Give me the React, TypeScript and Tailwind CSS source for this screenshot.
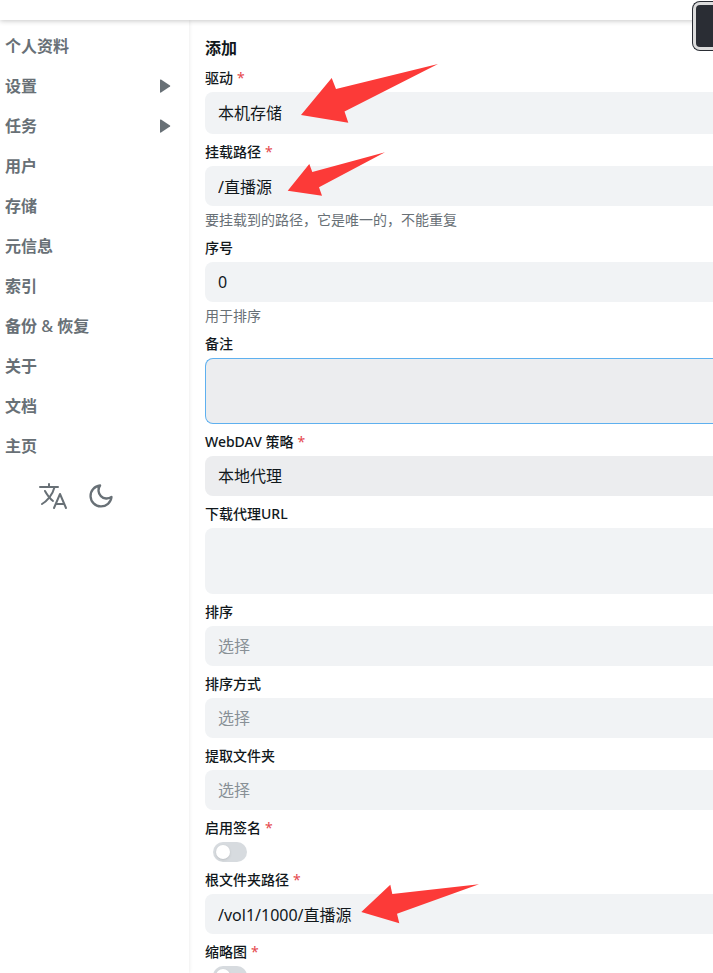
import React, { useState } from 'react';
import { IoLanguageOutline } from 'react-icons/io5';
import { FiMoon } from 'react-icons/fi';

type MenuItem = {
  key: string;
  title: React.ReactNode;
  hasChildren?: boolean;
};

const menus: MenuItem[] = [
  { key: 'profile', title: '个人资料' },
  { key: 'settings', title: '设置', hasChildren: true },
  { key: 'tasks', title: '任务', hasChildren: true },
  { key: 'users', title: '用户' },
  { key: 'storages', title: '存储' },
  { key: 'metas', title: '元信息' },
  { key: 'indexes', title: '索引' },
  {
    key: 'backup',
    title: (
      <span>
        备份 <span className="font-medium">&amp;</span> 恢复
      </span>
    ),
  },
  { key: 'about', title: '关于' },
  { key: 'docs', title: '文档' },
  { key: 'home', title: '主页' },
];

type FieldProps = {
  id: string;
  label: string;
  required?: boolean;
  help?: string;
  children: React.ReactNode;
};

const control =
  'block w-full appearance-none rounded-l-lg bg-[#f1f3f5] px-[13px] text-base outline-none';

function Field({ id, label, required, help, children }: FieldProps) {
  return (
    <div className="flex flex-col gap-1">
      <label htmlFor={id} className="text-sm leading-5 font-medium">
        {label}
        {required && <span className="ml-1 font-normal text-[#e5484d]">*</span>}
      </label>
      {children}
      {help && <p className="text-sm leading-5 text-[#687076]">{help}</p>}
    </div>
  );
}

function EmptySelect({ id, options }: { id: string; options: string[] }) {
  const [value, setValue] = useState<string>('');
  return (
    <select
      id={id}
      value={value}
      onChange={(e) => setValue(e.target.value)}
      className={`${control} h-10 ${value ? 'text-[#11181c]' : 'text-[#889096]'}`}
    >
      <option value="">选择</option>
      {options.map((option) => (
        <option key={option}>{option}</option>
      ))}
    </select>
  );
}

function Switch({ id }: { id: string }) {
  return (
    <input
      id={id}
      type="checkbox"
      className="ml-2 h-5 w-[34px] appearance-none rounded-full bg-[#d7dbdf] p-[3px] before:block before:size-[14px] before:rounded-full before:bg-white before:shadow-sm checked:bg-[#0090ff] checked:before:ml-[14px]"
    />
  );
}

function Arrow({ points, className }: { points: string; className: string }) {
  return (
    <svg
      aria-hidden="true"
      width="140"
      height="64"
      className={`pointer-events-none absolute ${className}`}
    >
      <polygon points={points} fill="#fc3a38" />
    </svg>
  );
}

export default function App() {
  const [path, setPath] = useState<string>('/直播源');
  const [order, setOrder] = useState<string>('0');
  const [root, setRoot] = useState<string>('/vol1/1000/直播源');

  return (
    <div className="relative flex h-screen flex-col overflow-hidden bg-white font-['Noto_Sans','Noto_Sans_CJK_SC',sans-serif] text-[#11181c]">
      <header className="relative z-10 h-5 shrink-0 bg-white shadow-[0_1px_5px_rgba(0,0,0,0.22)]" />
      <div className="flex min-h-0 flex-1">
        <aside className="w-[189px] shrink-0 pt-[6px] shadow-[0_0_4px_rgba(0,0,0,0.1)]">
          <nav className="flex flex-col">
            {menus.map((menu) => (
              <a
                key={menu.key}
                href="#"
                className="flex h-10 items-center justify-between pr-[18px] pl-[5px] text-base font-bold text-[#687076]"
              >
                {menu.title}
                {menu.hasChildren && (
                  <svg width="11" height="14" viewBox="0 0 11 14" fill="#687076">
                    <path d="M0 1Q0 0 1 0.600L10 6.400Q10.600 7 10 7.600L1 13.400Q0 14 0 13Z" />
                  </svg>
                )}
              </a>
            ))}
          </nav>
          <div className="mt-[14px] flex gap-4 pl-[37px] text-[#687076]">
            <button type="button" aria-label="语言">
              <IoLanguageOutline size={32} />
            </button>
            <button type="button" aria-label="深色模式" className="p-0.5">
              <FiMoon size={28} />
            </button>
          </div>
        </aside>
        <main className="min-w-0 flex-1 pt-4 pl-4">
          <form className="flex flex-col gap-2">
            <h1 className="text-base leading-6 font-bold">添加</h1>
            <Field id="driver" label="驱动" required>
              <select id="driver" className={`${control} h-[42px]`}>
                <option>本机存储</option>
              </select>
            </Field>
            <Field
              id="mount_path"
              label="挂载路径"
              required
              help="要挂载到的路径，它是唯一的，不能重复"
            >
              <input
                id="mount_path"
                value={path}
                onChange={(e) => setPath(e.target.value)}
                className={`${control} h-10`}
              />
            </Field>
            <Field id="order" label="序号" help="用于排序">
              <input
                id="order"
                value={order}
                onChange={(e) => setOrder(e.target.value)}
                className={`${control} h-10`}
              />
            </Field>
            <Field id="remark" label="备注">
              <textarea
                id="remark"
                className="block h-[66px] w-full resize-none rounded-l-lg border border-r-0 border-[#5eb0ef] bg-[#ecedef] px-3 py-2 text-base outline-none"
              />
            </Field>
            <Field id="webdav_policy" label="WebDAV 策略" required>
              <select
                id="webdav_policy"
                className="block h-10 w-full appearance-none rounded-l-lg bg-[#ecedef] px-[13px] text-base outline-none"
              >
                <option>本地代理</option>
              </select>
            </Field>
            <Field id="down_proxy_url" label="下载代理URL">
              <textarea
                id="down_proxy_url"
                className={`${control} h-[66px] resize-none py-2`}
              />
            </Field>
            <Field id="order_by" label="排序">
              <EmptySelect id="order_by" options={['名称', '大小', '修改时间']} />
            </Field>
            <Field id="order_direction" label="排序方式">
              <EmptySelect id="order_direction" options={['升序', '降序']} />
            </Field>
            <Field id="extract_folder" label="提取文件夹">
              <EmptySelect id="extract_folder" options={['提取到最前', '提取到最后']} />
            </Field>
            <Field id="enable_sign" label="启用签名" required>
              <Switch id="enable_sign" />
            </Field>
            <Field id="root_folder" label="根文件夹路径" required>
              <input
                id="root_folder"
                value={root}
                onChange={(e) => setRoot(e.target.value)}
                className={`${control} h-10`}
              />
            </Field>
            <Field id="thumbnail" label="缩略图" required>
              <Switch id="thumbnail" />
            </Field>
          </form>
        </main>
      </div>

      <Arrow
        className="top-[64px] left-[300px]"
        points="1,51 31.700,14 36,25 138,0 44.500,47.500 48.300,58.700"
      />
      <Arrow
        className="top-[152px] left-[286px]"
        points="1.700,38.700 23.300,12 26.300,20 99,0.300 33,35.300 36,43.700"
      />
      <Arrow
        className="top-[884px] left-[360px]"
        points="1.300,28 30.300,0.700 32.300,10 119,0.300 37,29.700 39.300,39.300"
      />
      <div className="absolute top-px right-0 z-20 h-[50px] w-[21px] rounded-l-lg border border-r-0 border-[#2a2d34] bg-[#dcdcdc] py-[3px] pl-[3px]">
        <div className="h-full rounded-l bg-[#2a2d34]" />
      </div>
    </div>
  );
}
